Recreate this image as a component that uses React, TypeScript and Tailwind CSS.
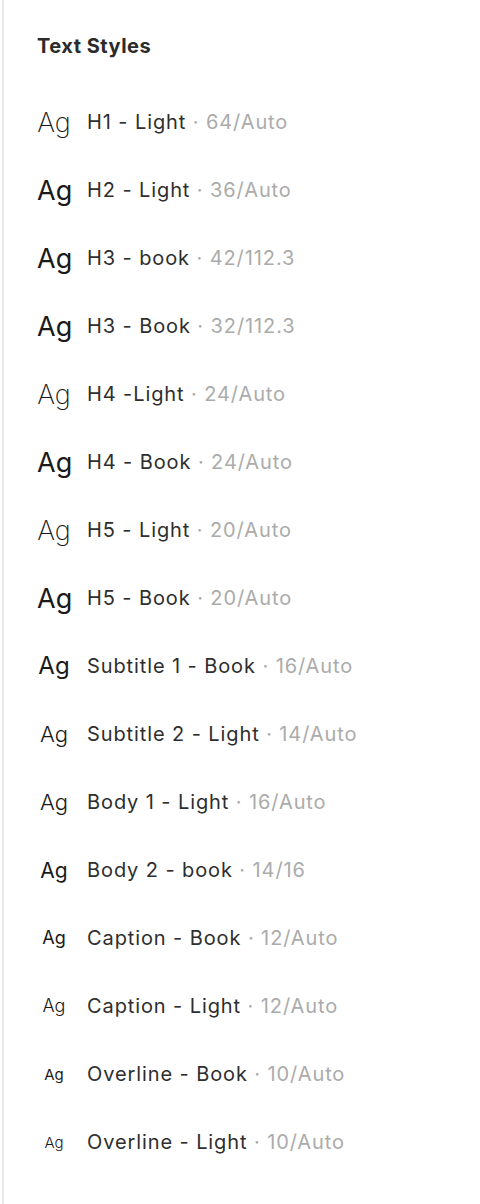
const styles = [
    { name: "H1 - Light", meta: "64/Auto", size: "text-[27px]", weight: "font-extralight" },
    { name: "H2 - Light", meta: "36/Auto", size: "text-[27px]", weight: "font-normal" },
    { name: "H3 - book", meta: "42/112.3", size: "text-[27px]", weight: "font-normal" },
    { name: "H3 - Book", meta: "32/112.3", size: "text-[27px]", weight: "font-normal" },
    { name: "H4 -Light", meta: "24/Auto", size: "text-[27px]", weight: "font-extralight" },
    { name: "H4 - Book", meta: "24/Auto", size: "text-[27px]", weight: "font-normal" },
    { name: "H5 - Light", meta: "20/Auto", size: "text-[27px]", weight: "font-extralight" },
    { name: "H5 - Book", meta: "20/Auto", size: "text-[27px]", weight: "font-normal" },
    { name: "Subtitle 1 - Book", meta: "16/Auto", size: "text-[24px]", weight: "font-normal" },
    { name: "Subtitle 2 - Light", meta: "14/Auto", size: "text-[22px]", weight: "font-light" },
    { name: "Body 1 - Light", meta: "16/Auto", size: "text-[22px]", weight: "font-light" },
    { name: "Body 2 - book", meta: "14/16", size: "text-[21px]", weight: "font-normal" },
    { name: "Caption - Book", meta: "12/Auto", size: "text-[18px]", weight: "font-normal" },
    { name: "Caption - Light", meta: "12/Auto", size: "text-[18px]", weight: "font-light" },
    { name: "Overline - Book", meta: "10/Auto", size: "text-[15px]", weight: "font-normal" },
    { name: "Overline - Light", meta: "10/Auto", size: "text-[15px]", weight: "font-light" },
];

function App() {
    return (
        <div className="min-h-[1204px] w-[480px] bg-white pl-[2px]">
            <div className="min-h-[1204px] border-l-2 border-[#e8e8e8] pl-[33px] pt-[32px] font-['Inter',sans-serif]">
                <h2 className="text-[20px] leading-[28px] font-bold tracking-[0.5px] text-[#2b2b2b]">
                    Text Styles
                </h2>

                <div className="mt-[28px] flex flex-col">
                    {styles.map((s) => (
                        <div key={s.name} className="flex h-[68px] items-center">
                            <div
                                className={`w-[34px] text-center leading-none text-[#1a1a1a] ${s.size} ${s.weight}`}
                            >
                                Ag
                            </div>

                            <div className="ml-[16px] text-[20px] leading-[28px] tracking-[0.9px] text-[#2e2e2e]">
                                {s.name}
                                <span className="text-[#ababab]"> · {s.meta}</span>
                            </div>
                        </div>
                    ))}
                </div>
            </div>
        </div>
    );
}

export default App;
